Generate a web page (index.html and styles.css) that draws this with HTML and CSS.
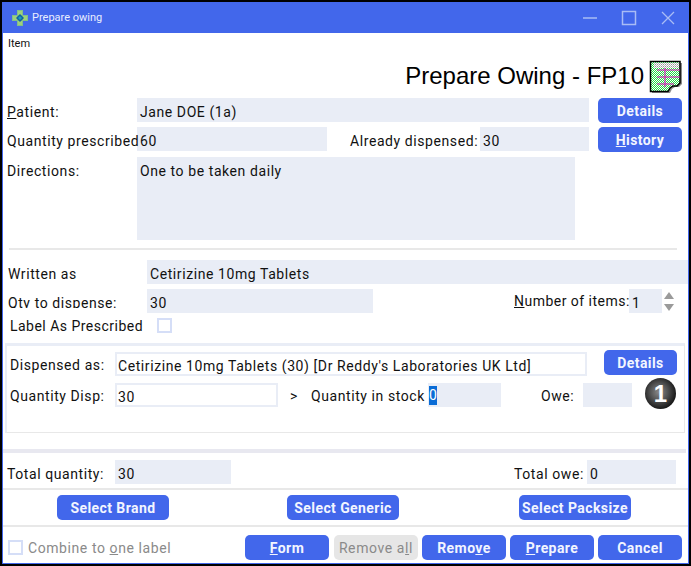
FILE: index.html
```html
<!DOCTYPE html>
<html lang="en">
<head>
<meta charset="utf-8">
<title>Prepare owing</title>
<link rel="stylesheet" href="styles.css">
</head>
<body>
<div class="window">
  <header class="titlebar">
    <svg class="app-icon" width="16" height="16" viewBox="0 0 16 16"><path d="M5 0h6v5h5v6h-5v5H5v-5H0V5h5z" fill="#7fc08a"/><path d="M6 1h4v4H6zM1 6h4v4H1zM11 6h4v4h-4zM6 11h4v4H6z" fill="#9ed07c"/><path d="M8 4l4 4-4 4-4-4z" fill="#0f62a0"/><path d="M8 6l2 2-2 2-2-2z" fill="#1aa0b8"/></svg>
    <span class="title-text">Prepare owing</span>
    <span class="win-controls">
      <svg width="16" height="16" viewBox="0 0 16 16"><path d="M1 8h14" stroke="#a9bcf5" stroke-width="1.500"/></svg>
      <svg width="16" height="16" viewBox="0 0 16 16"><path d="M1.500 1.500h13v13h-13z" fill="none" stroke="#a9bcf5" stroke-width="1.500"/></svg>
      <svg width="16" height="16" viewBox="0 0 16 16"><path d="M2 2l12 12M14 2L2 14" stroke="#a9bcf5" stroke-width="1.300"/></svg>
    </span>
  </header>
  <div class="menu">Item</div>
  <div class="heading">
    <span class="heading-text">Prepare Owing - FP10</span>
    <svg class="form-icon" width="33" height="33" viewBox="0 0 33 33">
      <defs><pattern id="chk" width="2" height="2" patternUnits="userSpaceOnUse"><rect width="2" height="2" fill="#fff"/><rect width="1" height="1" fill="#22dd44"/><rect x="1" y="1" width="1" height="1" fill="#22dd44"/></pattern>
      <pattern id="grey" width="2" height="2" patternUnits="userSpaceOnUse"><rect width="2" height="2" fill="#fff"/><rect width="1" height="1" fill="#999"/><rect x="1" y="1" width="1" height="1" fill="#bbb"/></pattern></defs>
      <path d="M3 3h30v21l-3 3-4 0-3 2-2 4H3z" fill="#8a8a8a"/>
      <path d="M1.500 1.500h29.500v21.500l-3 3h-4l-3 2-2 3.500H1.500z" fill="url(#chk)" stroke="#000" stroke-width="1.500"/>
      <rect x="5" y="3" width="25" height="5" fill="url(#grey)"/>
      <path d="M8 10h23M8 17h23M8 24h17M16 8v19" stroke="#e010c0" stroke-width="1" fill="none"/>
    </svg>
  </div>

  <div class="row r-patient">
    <label class="lbl w130"><u>P</u>atient:</label>
    <div class="field f-patient">Jane DOE (1a)</div>
    <button class="btn b-side">Details</button>
  </div>
  <div class="row r-qty">
    <label class="lbl w130">Quantity prescribed</label>
    <div class="field f-prescribed">60</div>
    <label class="lbl l-already">Already dispensed:</label>
    <div class="field f-already">30</div>
    <button class="btn b-side"><u>H</u>istory</button>
  </div>
  <div class="row r-dir">
    <label class="lbl w130">Directions:</label>
    <div class="field f-dir">One to be taken daily</div>
  </div>
  <hr class="rule rule-inset">

  <div class="row r-written">
    <label class="lbl w139">Written as</label>
    <div class="field f-written">Cetirizine 10mg Tablets</div>
  </div>
  <div class="row r-qtyd">
    <label class="lbl w139 clipped">Qty to dispense:</label>
    <div class="field f-qtyd">30</div>
    <label class="lbl l-items"><u>N</u>umber of items:</label>
    <div class="field f-items">1</div>
    <span class="spin"><i class="up"></i><i class="down"></i></span>
  </div>
  <div class="row r-label">
    <label class="lbl l-asp">Label As Prescribed</label>
    <span class="check"></span>
  </div>

  <section class="panel">
    <div class="row p-disp">
      <label class="lbl w105">Dispensed as:</label>
      <div class="field white f-disp">Cetirizine 10mg Tablets (30) [Dr Reddy's Laboratories UK Ltd]</div>
      <button class="btn b-pdetails">Details</button>
    </div>
    <div class="row p-qty">
      <label class="lbl w105">Quantity Disp:</label>
      <div class="field white f-qdisp">30</div>
      <span class="lbl gt">&gt;</span>
      <label class="lbl l-stock">Quantity in stock</label>
      <div class="field f-stock"><span class="sel">0</span></div>
      <label class="lbl l-owe">Owe:</label>
      <div class="field f-owe"></div>
      <span class="badge">1</span>
    </div>
  </section>

  <div class="row r-total">
    <label class="lbl w108">Total quantity:</label>
    <div class="field f-total">30</div>
    <label class="lbl l-towe">Total owe:</label>
    <div class="field f-towe">0</div>
  </div>
  <hr class="rule">
  <div class="row r-select">
    <button class="btn b-sel">Select Brand</button>
    <button class="btn b-sel">Select Generic</button>
    <button class="btn b-sel">Select Packsize</button>
  </div>
  <hr class="rule">
  <div class="row r-bottom">
    <span class="check c-combine"></span>
    <span class="lbl muted">Combine to <u>o</u>ne label</span>
    <span class="actions">
      <button class="btn b-act b-form"><u>F</u>orm</button>
      <button class="btn b-act disabled">Remove a<u>l</u>l</button>
      <button class="btn b-act">Remo<u>v</u>e</button>
      <button class="btn b-act"><u>P</u>repare</button>
      <button class="btn b-act">Cancel</button>
    </span>
  </div>
</div>
</body>
</html>
```
FILE: styles.css
```css
* { box-sizing: border-box; }
html, body { margin: 0; padding: 0; background: #000; }
body { width: 691px; height: 566px; overflow: hidden; font-family: Roboto, "Liberation Sans", sans-serif; font-size: 14px; color: #111; padding: 2px 0 0 2px; }
.window { width: 687px; height: 562px; background: #fff; border: 1px solid #4267eb; border-top: 0; display: flex; flex-direction: column; }
.titlebar { height: 31px; flex: none; background: #4267eb; color: #e8edff; display: flex; align-items: center; padding-left: 9px; font-size: 11px; }
.app-icon { margin-right: 4px; }
.win-controls { margin-left: auto; display: flex; gap: 23px; padding-right: 12px; }
.menu { height: 19px; flex: none; font-size: 11px; padding: 4px 0 0 5px; color: #111; line-height: 14px; }
.heading { height: 46px; flex: none; display: flex; justify-content: flex-end; align-items: flex-start; padding: 8px 6px 0 0; }
.heading-text { font-family: "Liberation Sans", sans-serif; font-size: 24px; color: #000; line-height: 32px; margin-right: 5px; }
.form-icon { flex: none; }
.row { display: flex; align-items: flex-start; padding-left: 4px; flex: none; }
.lbl { flex: none; letter-spacing: 0.58px; white-space: nowrap; line-height: 29px; z-index: 1; }
.field { height: 24px; flex: none; background: #e9edf6; line-height: 29px; padding-left: 3px; letter-spacing: 0.58px; white-space: nowrap; overflow: hidden; }
.field.white { background: #fff; border: 2px solid #e9edf6; line-height: 24px; padding-left: 1px; }
.panel .lbl { line-height: 27px; }
.btn { border: 0; background: #4267eb; color: #f2f5ff; font: 700 14px Roboto, "Liberation Sans", sans-serif; letter-spacing: 0.42px; border-radius: 5px; height: 25px; padding: 0; flex: none; }
.btn.disabled { background: #e6e6e6; color: #8a8a8a; font-weight: 400; letter-spacing: 0.6px; }
.w130 { width: 130px; }
.w139 { width: 140px; padding-left: 1px; }
.w105 { width: 106px; padding-left: 1px; }
.w108 { width: 108px; }
.r-patient { height: 29px; }
.f-patient { width: 452px; }
.b-side { width: 84px; margin-left: 9px; }
.r-qty { height: 30px; }
.f-prescribed { width: 190px; }
.l-already { margin-left: 23px; width: 130px; }
.f-already { width: 109px; }
.r-dir { height: 83px; }
.f-dir { width: 438px; height: 83px; }
.rule { border: 0; height: 2px; margin: 0 0 5px; background: #e8e8e8; flex: none; width: 685px; }
.rule-inset { margin: 8px 0 10px 6px; width: 668px; }
.r-written { height: 29px; }
.f-written { width: 541px; }
.r-qtyd { height: 29px; }
.clipped { height: 13px; line-height: 16px; overflow: hidden; margin-top: 6px; }
.f-qtyd { width: 226px; }
.l-items { margin-left: 141px; width: 115px; line-height: 24px; letter-spacing: 0.48px; }
.f-items { width: 33px; }
.spin { display: flex; flex-direction: column; gap: 5px; margin-left: 2px; padding-top: 3px; }
.spin i { display: block; width: 0; height: 0; border-left: 5px solid transparent; border-right: 5px solid transparent; }
.spin .up { border-bottom: 7px solid #9a9a9a; }
.spin .down { border-top: 7px solid #9a9a9a; }
.r-label { height: 25px; }
.l-asp { margin-left: 3px; width: 147px; line-height: 16px; letter-spacing: 0.48px; }
.check { width: 15px; height: 15px; border: 2px solid #d5def7; background: #fff; flex: none; display: block; }
.panel { height: 90px; width: 680px; margin-left: 2px; flex: none; border: 1px solid #e8e8e8; border-top: 3px solid #e9edf6; border-left: 2px solid #e9edf6; padding-top: 4px; }
.row.p-disp { height: 33px; padding-left: 2px; }
.p-disp .lbl { margin-top: 2px; }
.f-disp { width: 472px; margin-top: 2px; }
.b-pdetails { width: 73px; margin-left: 17px; }
.row.p-qty { height: 32px; padding-left: 2px; }
.f-qdisp { width: 163px; }
.gt { margin-left: 12px; width: 21px; }
.l-stock { width: 117px; }
.f-stock { width: 73px; padding-left: 1px; }
.sel { background: #0a6cd6; color: #fff; display: block; line-height: 19px; width: 8px; margin-top: 3px; letter-spacing: 0; }
.l-owe { margin-left: 40px; width: 42px; }
.f-owe { width: 49px; }
.badge { width: 31px; height: 31px; margin-left: 13px; margin-top: -5px; border-radius: 50%; flex: none; background: radial-gradient(circle at 45% 45%, #8a8a8a 0, #555 35%, #1a1a1a 70%, #000 85%); color: #fff; font: 700 24px/31px "Liberation Sans", sans-serif; text-align: center; }
.row.r-total { height: 28px; margin-top: 27px; position: relative; }
.r-total::before { content: ""; position: absolute; left: 0; right: 2px; top: -11px; height: 4px; background: #e8e8f0; }
.l-towe { margin-left: 283px; width: 73px; }
.f-total { width: 116px; }
.f-towe { width: 89px; }
.row.r-select { height: 25px; padding-left: 54px; gap: 118px; margin-bottom: 5px; }
.b-sel { width: 112px; }
.b-sel:last-child { margin-left: 2px; }
.row.r-bottom { height: 25px; margin-top: 3px; }
.c-combine { margin: 5px 5px 0 1px; }
.lbl.muted { color: #8a8a8a; line-height: 27px; }
.actions { margin-left: auto; margin-right: 6px; display: flex; gap: 4px; }
.b-act { width: 84px; }
.b-form { margin-right: 1px; }
```
